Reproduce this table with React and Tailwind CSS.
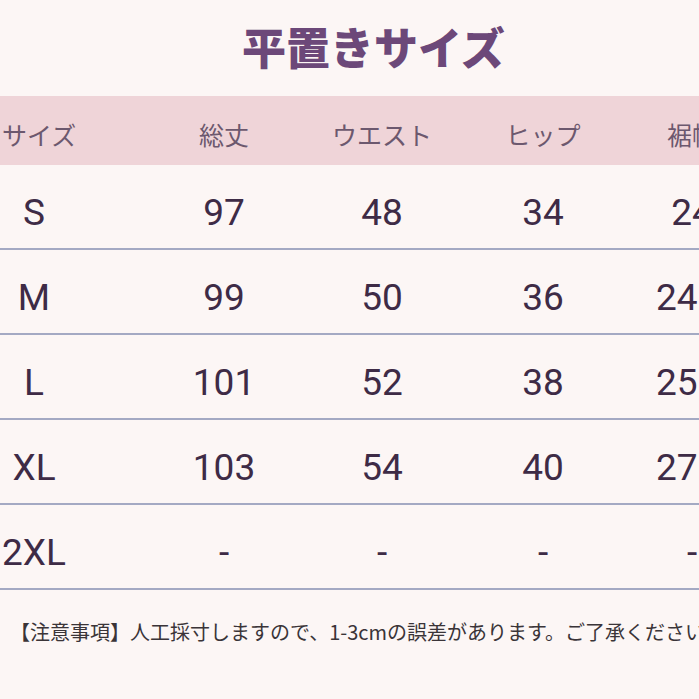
import React from 'react';

const cols = ['サイズ', '総丈', 'ウエスト', 'ヒップ', '裾幅'];

const rows = [
  ['S', '97', '48', '34', '24'],
  ['M', '99', '50', '36', '24.5'],
  ['L', '101', '52', '38', '25.5'],
  ['XL', '103', '54', '40', '27.5'],
  ['2XL', '-', '-', '-', '-'],
];

const grid = 'grid grid-cols-[68px_234px_160px_162px_136px] w-[760px]';
const cellPad = ['', 'pl-[78px]', '', '', ''];

export default function App() {
  return (
    <div className="w-[699px] h-[699px] overflow-hidden bg-[#fcf6f5]" style={{ fontFamily: '"Noto Sans CJK JP", "Noto Sans", sans-serif' }}>
      {/* Title */}
      <div className="h-[96px] flex items-center pl-[242px] pb-1">
        <h1 className="text-[44px] font-black text-[#6c4879] leading-none whitespace-nowrap">平置きサイズ</h1>
      </div>

      {/* Header band */}
      <div className="bg-[#efd4d8] h-[69px]">
        <div className={`${grid} h-full items-center`}>
          {cols.map((c, i) => (
            <div key={c} className={`text-center whitespace-nowrap text-[25px] text-[#6c586e] pt-2 ${cellPad[i]} ${i === 0 ? 'pl-[2px]' : ''}`}>
              {c}
            </div>
          ))}
        </div>
      </div>

      {/* Rows */}
      {rows.map((r) => (
        <div key={r[0]} className="h-[85px] border-b-2 border-[#a4a9c3]">
          <div className={`${grid} h-full items-center`}>
            {r.map((v, i) => (
              <div
                key={i}
                className={`text-center whitespace-nowrap text-[37px] text-[#3e2b46] pt-3 ${cellPad[i]}`}
                style={{ fontFamily: '"Roboto", sans-serif' }}
              >
                {v}
              </div>
            ))}
          </div>
        </div>
      ))}

      {/* Note */}
      <div className="pl-[10px] pt-[32px] whitespace-nowrap text-[20px] text-[#3a3438] leading-none">
        【注意事項】人工採寸しますので、1-3cmの誤差があります。ご了承ください。
      </div>
    </div>
  );
}
